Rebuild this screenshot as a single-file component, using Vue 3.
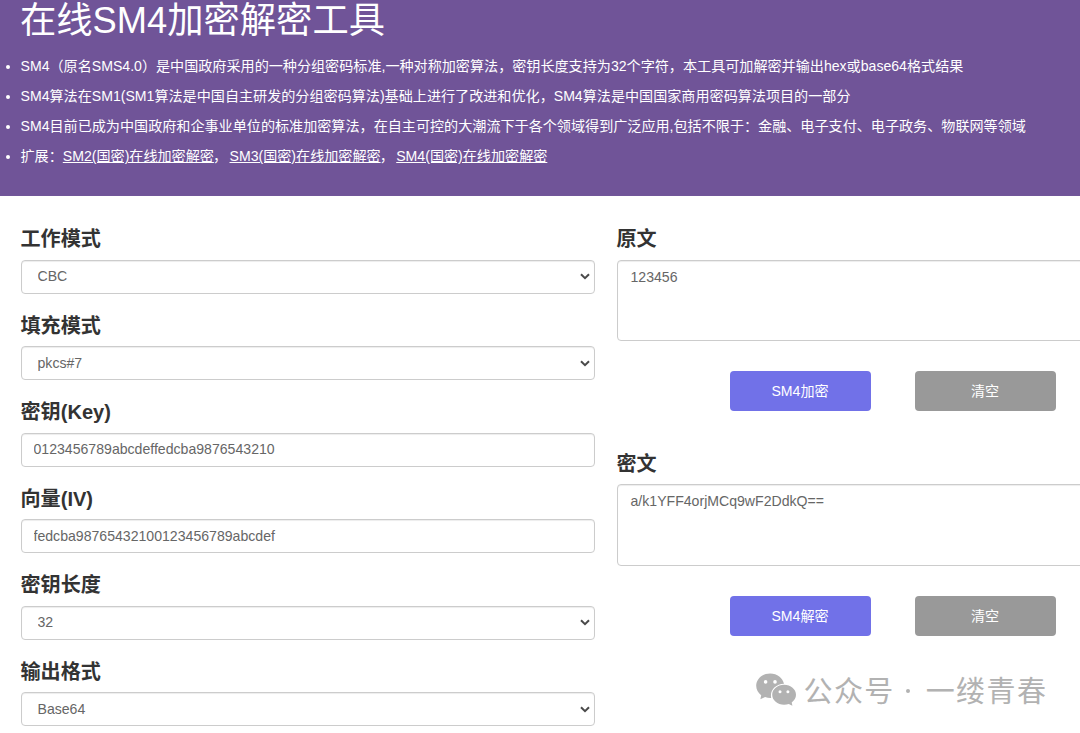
<script setup>
import { reactive } from 'vue';

const form = reactive({
  mode: 'CBC',
  padding: 'pkcs#7',
  key: '0123456789abcdeffedcba9876543210',
  iv: 'fedcba98765432100123456789abcdef',
  keyLength: '32',
  output: 'Base64',
  plain: '123456',
  cipher: 'a/k1YFF4orjMCq9wF2DdkQ=='
});

const fields = [
  { name: 'mode', label: '工作模式', options: ['CBC', 'ECB'] },
  { name: 'padding', label: '填充模式', options: ['pkcs#7', 'none'] },
  { name: 'key', label: '密钥(Key)' },
  { name: 'iv', label: '向量(IV)' },
  { name: 'keyLength', label: '密钥长度', options: ['32'] },
  { name: 'output', label: '输出格式', options: ['Base64', 'Hex'] }
];

const panels = [
  { name: 'plain', label: '原文', action: 'SM4加密' },
  { name: 'cipher', label: '密文', action: 'SM4解密' }
];

const intro = [
  'SM4（原名SMS4.0）是中国政府采用的一种分组密码标准,一种对称加密算法，密钥长度支持为32个字符，本工具可加解密并输出hex或base64格式结果',
  'SM4算法在SM1(SM1算法是中国自主研发的分组密码算法)基础上进行了改进和优化，SM4算法是中国国家商用密码算法项目的一部分',
  'SM4目前已成为中国政府和企事业单位的标准加密算法，在自主可控的大潮流下于各个领域得到广泛应用,包括不限于：金融、电子支付、电子政务、物联网等领域'
];

const links = ['SM2(国密)在线加密解密', 'SM3(国密)在线加密解密', 'SM4(国密)在线加密解密'];

const clear = (name) => {
  form[name] = '';
};
</script>

<template>
  <div class="page">
    <header class="banner">
      <h1 class="title">在线SM4加密解密工具</h1>
      <ul class="intro">
        <li v-for="text in intro" :key="text">{{ text }}</li>
        <li>
          <span>扩展：</span><template v-for="(link, i) in links" :key="link"><a href="#" @click.prevent>{{ link }}</a><span v-if="i < links.length - 1" class="comma">，</span></template>
        </li>
      </ul>
    </header>

    <main class="content">
      <div class="settings">
        <div v-for="field in fields" :key="field.name" class="field">
          <label class="label" :for="field.name">{{ field.label }}</label>
          <div v-if="field.options" class="select-box">
            <select :id="field.name" v-model="form[field.name]" class="control select">
              <option v-for="opt in field.options" :key="opt" :value="opt">{{ opt }}</option>
            </select>
            <svg class="arrow" viewBox="0 0 10 7" width="10" height="7">
              <path d="M1 1.2L5 5.2L9 1.2" fill="none" stroke="#4a4a4a" stroke-width="2" />
            </svg>
          </div>
          <input v-else :id="field.name" v-model="form[field.name]" class="control" type="text" spellcheck="false" />
        </div>
      </div>

      <div class="panels">
        <div v-for="panel in panels" :key="panel.name" class="panel">
          <label class="label" :for="panel.name">{{ panel.label }}</label>
          <textarea :id="panel.name" v-model="form[panel.name]" class="control area" spellcheck="false"></textarea>
          <div class="actions">
            <button class="btn primary">{{ panel.action }}</button>
            <button class="btn" @click="clear(panel.name)">清空</button>
          </div>
        </div>
      </div>
    </main>

    <div class="watermark">
      <svg class="wechat" viewBox="0 0 40 33" width="40" height="33">
        <path
          fill="#b2b2b2"
          d="M14.2 0.5C6.4 0.5 0.2 5.9 0.2 12.8C0.2 16.6 2.1 20 5.2 22.3L4.4 26.2L9.1 23.9C11 24.6 12.8 25 15.2 24.9C13.6 17.4 19.5 11.2 28 10.8C26.8 4.9 21.2 0.5 14.2 0.5Z"
        />
        <path
          fill="#b2b2b2"
          d="M28.1 11.8C21.5 11.8 16.2 16.3 16.2 21.8C16.2 27.4 21.5 31.7 28.1 31.7C29.8 31.7 31.4 31.4 32.8 30.9L36.4 32.7L35.7 29.4C38.4 27.5 40 24.9 40 21.8C40 16.3 34.7 11.8 28.1 11.8Z"
        />
        <circle cx="9.6" cy="8.9" r="1.8" fill="#fff" />
        <circle cx="19" cy="8.9" r="1.8" fill="#fff" />
        <circle cx="24" cy="18.7" r="1.5" fill="#fff" />
        <circle cx="31.9" cy="18.7" r="1.5" fill="#fff" />
      </svg>
      <span class="account">公众号</span>
      <span class="dot"></span>
      <span class="account">一缕青春</span>
    </div>
  </div>
</template>

<style>
body {
  overflow: hidden;
}
</style>

<style scoped>
.page {
  position: relative;
  width: 1080px;
  height: 733px;
  overflow: hidden;
  background: #fff;
  color: #333;
  font-family: "Liberation Sans", "Noto Sans CJK SC", sans-serif;
  font-size: 14.1px;
}

.page * {
  box-sizing: border-box;
}

.banner {
  height: 196px;
  padding-left: 20px;
  border-bottom: 1px solid #715699;
  background: #705498;
  color: #fff;
}

.title {
  margin: 0;
  height: 50.4px;
  font-size: 36.3px;
  font-weight: 400;
  line-height: 42px;
  white-space: nowrap;
}

.intro {
  margin: 0;
  padding: 0;
  list-style: none;
}

.intro li {
  display: flex;
  align-items: center;
  height: 30.25px;
  margin-left: -14px;
  line-height: 30px;
  white-space: nowrap;
}

.intro li::before {
  content: "";
  width: 4px;
  height: 4px;
  margin: 2px 11px 0 -0.5px;
  border-radius: 50%;
  background: #fff;
}

.intro a {
  color: #fff;
  text-decoration: underline;
}

.comma {
  width: 15.6px;
  text-indent: -1px;
}

.content {
  display: flex;
  gap: 22px;
  padding: 27px 0 0 21px;
}

.settings {
  flex: none;
  width: 574px;
}

.field {
  height: 86.6px;
}

.label {
  display: block;
  height: 36.5px;
  margin-left: -0.5px;
  font-size: 20.1px;
  font-weight: 700;
  line-height: 32px;
}

.control {
  display: block;
  width: 100%;
  height: 34px;
  margin: 0;
  padding: 0 12px 1px 11.5px;
  border: 1px solid #ccc;
  border-radius: 4px;
  outline: none;
  background: #fff;
  box-shadow: inset 0 1px 1px rgba(0, 0, 0, 0.075);
  color: #666;
  font-family: inherit;
  font-size: 14.1px;
}

.select-box {
  position: relative;
}

.select {
  padding: 0 16px 1px 15.5px;
  appearance: none;
}

.arrow {
  position: absolute;
  top: 13.5px;
  right: 5.5px;
  pointer-events: none;
}

.panels {
  flex: none;
  width: 480px;
}

.panel {
  height: 224.5px;
}

.area {
  width: 480px;
  height: 81.5px;
  padding: 6px 12.5px;
  line-height: 20px;
  resize: none;
}

.actions {
  display: flex;
  gap: 44px;
  padding: 30px 0 0 112.5px;
}

.btn {
  width: 141px;
  height: 40px;
  padding: 0 0 2px;
  border: none;
  border-radius: 4px;
  background: #999;
  color: #fff;
  font-family: inherit;
  font-size: 14.1px;
  cursor: pointer;
}

.btn.primary {
  background: #7171e8;
}

.watermark {
  position: absolute;
  left: 756px;
  top: 672px;
  display: flex;
  align-items: center;
  height: 34px;
  color: #b2b2b2;
}

.wechat {
  margin-right: 7.5px;
}

.account {
  font-family: "Noto Sans CJK SC", sans-serif;
  font-size: 29px;
  letter-spacing: 1.4px;
  line-height: 34px;
  white-space: nowrap;
}

.dot {
  width: 4px;
  height: 4px;
  margin: 3px 16px 0 11px;
  border-radius: 50%;
  background: #b2b2b2;
}
</style>
